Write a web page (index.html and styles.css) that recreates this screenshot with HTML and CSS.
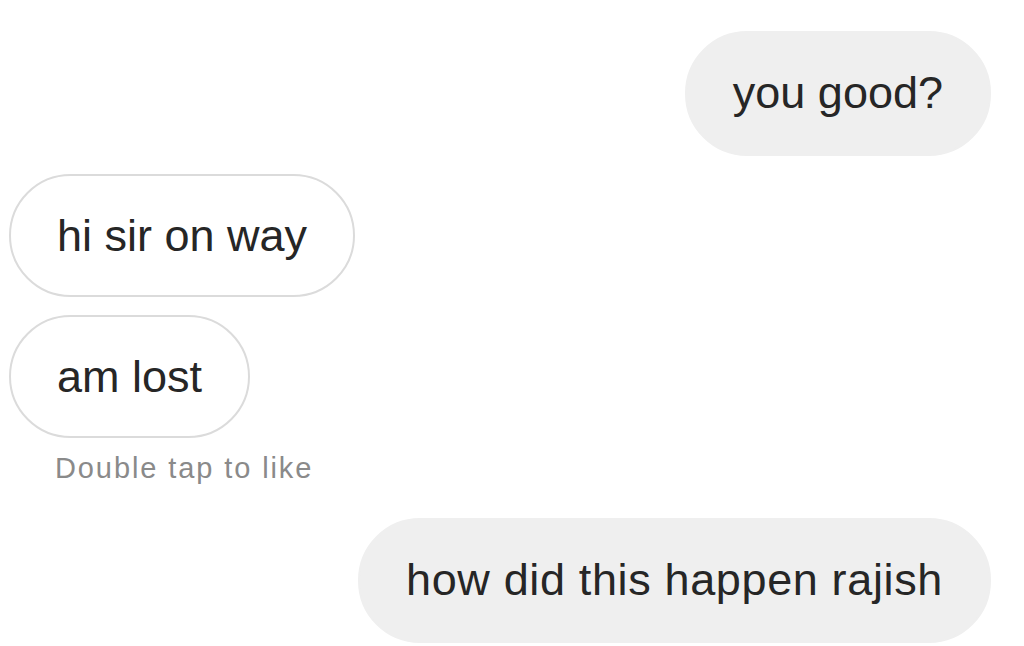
FILE: index.html
```html
<!DOCTYPE html>
<html>
<head>
<meta charset="utf-8">
<link rel="stylesheet" href="styles.css">
</head>
<body>
<div class="thread">
  <div class="bubble out first">you good?</div>
  <div class="bubble in">hi sir on way</div>
  <div class="bubble in">am lost</div>
  <div class="caption">Double tap to like</div>
  <div class="bubble out last">how did this happen rajish</div>
</div>
</body>
</html>
```
FILE: styles.css
```css
html, body {
  margin: 0;
  padding: 0;
  background: #ffffff;
}
body {
  font-family: "Liberation Sans", Arial, sans-serif;
  width: 1024px;
  height: 646px;
  overflow: hidden;
}
.thread {
  display: flex;
  flex-direction: column;
  align-items: flex-start;
  padding: 31px 33px 0 9px;
}
.bubble {
  box-sizing: border-box;
  height: 124px;
  border-radius: 62px;
  font-size: 45px;
  line-height: 52px;
  padding: 34px 46px 0 46px;
  color: #262626;
  white-space: nowrap;
}
.out {
  align-self: flex-end;
  background: #efefef;
  border: 2px solid #efefef;
  height: 125px;
}
.in {
  background: #ffffff;
  border: 2px solid #dbdbdb;
  margin-top: 18px;
  height: 123px;
}
.caption {
  margin-top: 13px;
  margin-left: 46px;
  font-size: 29px;
  line-height: 34px;
  letter-spacing: 1.9px;
  color: #8a8a8a;
}
.last {
  margin-top: 33px;
  letter-spacing: 0.64px;
}
```
